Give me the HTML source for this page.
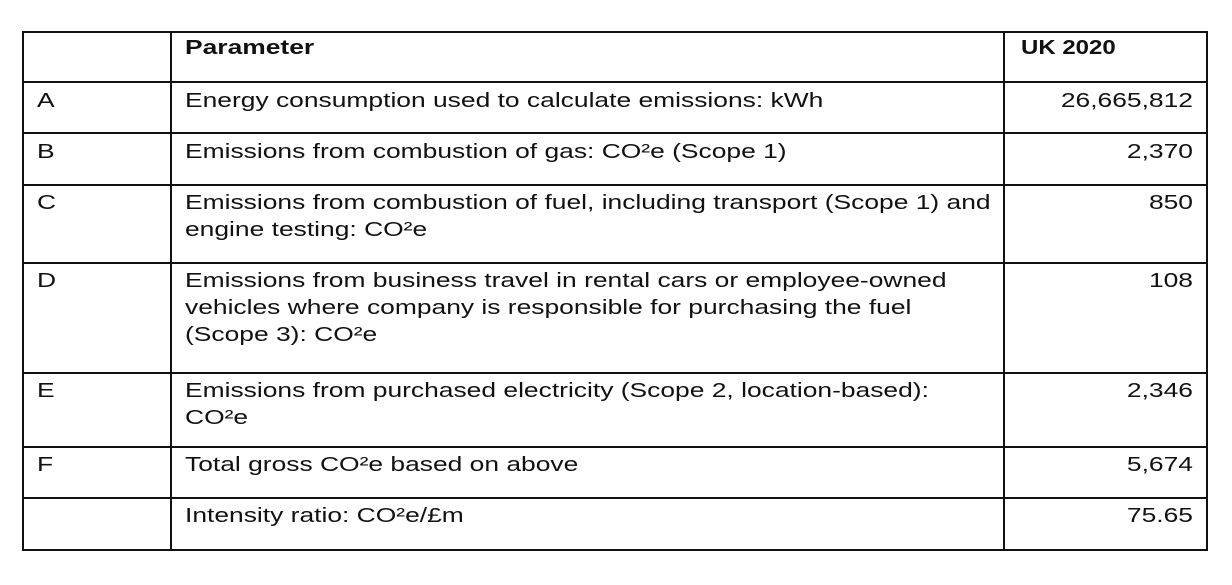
<!DOCTYPE html>
<html><head><style>
body{margin:0;width:1232px;height:585px;background:#fff;position:relative;overflow:hidden;font-family:"Liberation Sans",Arial,sans-serif;color:#111;}
.h{position:absolute;height:2px;background:#111;left:23px;width:1185px}
.v{position:absolute;width:2px;background:#111;top:31px;height:520px}
.t{position:absolute;font-size:20px;line-height:27px;white-space:nowrap;transform:scaleX(1.32);transform-origin:left top}
.r{text-align:right;width:400px;left:793px;transform-origin:right top}
b{font-weight:bold}
</style></head><body>
<div class="h" style="top:31px"></div>
<div class="h" style="top:81px"></div>
<div class="h" style="top:132px"></div>
<div class="h" style="top:184px"></div>
<div class="h" style="top:262px"></div>
<div class="h" style="top:372px"></div>
<div class="h" style="top:446px"></div>
<div class="h" style="top:497px"></div>
<div class="h" style="top:549px"></div>
<div class="v" style="left:22px"></div>
<div class="v" style="left:170px"></div>
<div class="v" style="left:1003px"></div>
<div class="v" style="left:1206px"></div>

<div class="t" style="left:185px;top:35px"><b>Parameter</b></div>
<div class="t" style="left:1021px;top:35px;transform:scaleX(1.2)"><b>UK 2020</b></div>

<div class="t" style="left:37px;top:88px">A</div>
<div class="t" style="left:185px;top:88px">Energy consumption used to calculate emissions: kWh</div>
<div class="t r" style="top:88px">26,665,812</div>

<div class="t" style="left:37px;top:139px">B</div>
<div class="t" style="left:185px;top:139px">Emissions from combustion of gas: CO²e (Scope 1)</div>
<div class="t r" style="top:139px">2,370</div>

<div class="t" style="left:37px;top:190px">C</div>
<div class="t" style="left:185px;top:190px">Emissions from combustion of fuel, including transport (Scope 1) and<br>engine testing: CO²e</div>
<div class="t r" style="top:190px">850</div>

<div class="t" style="left:37px;top:268px">D</div>
<div class="t" style="left:185px;top:268px">Emissions from business travel in rental cars or employee-owned<br>vehicles where company is responsible for purchasing the fuel<br>(Scope 3): CO²e</div>
<div class="t r" style="top:268px">108</div>

<div class="t" style="left:37px;top:378px">E</div>
<div class="t" style="left:185px;top:378px">Emissions from purchased electricity (Scope 2, location-based):<br>CO²e</div>
<div class="t r" style="top:378px">2,346</div>

<div class="t" style="left:37px;top:452px">F</div>
<div class="t" style="left:185px;top:452px">Total gross CO²e based on above</div>
<div class="t r" style="top:452px">5,674</div>

<div class="t" style="left:185px;top:503px">Intensity ratio: CO²e/£m</div>
<div class="t r" style="top:503px">75.65</div>
</body></html>
